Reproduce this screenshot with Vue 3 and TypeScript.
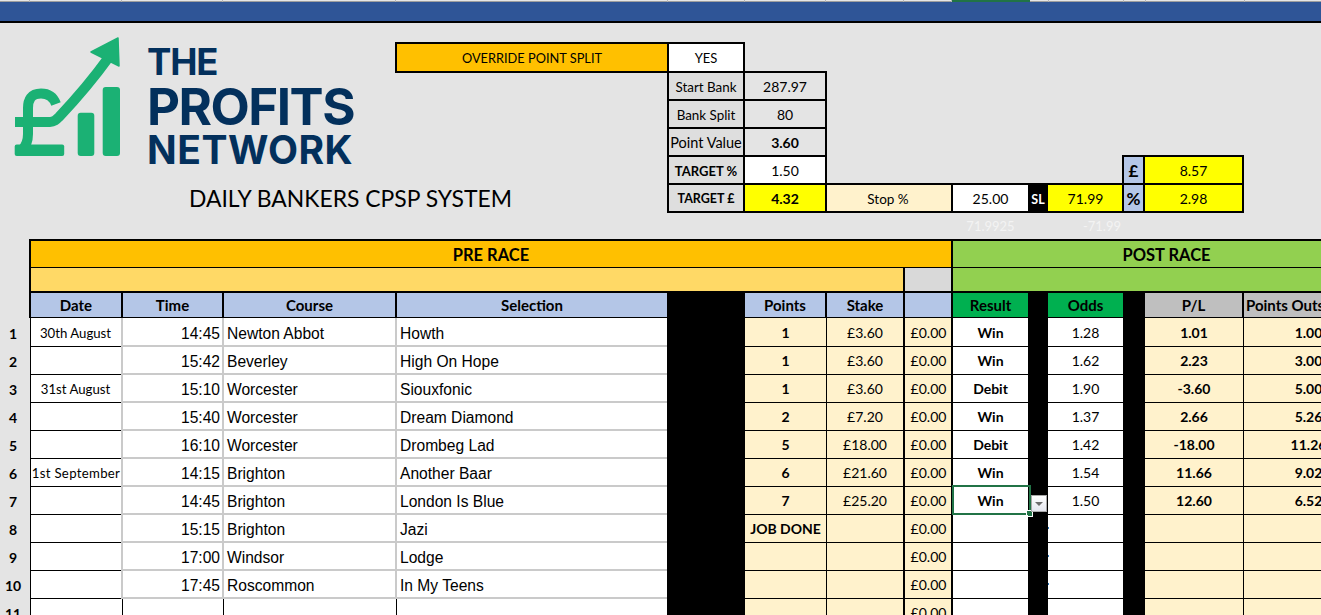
<script setup lang="ts">
interface Row {
  n: number
  date: string
  time: string
  course: string
  sel: string
  pts: string
  stake: string
  res: string
  odds: string
  pl: string
  outs: string
}

const rows: Row[] = [
  { n: 1, date: '30th August', time: '14:45', course: 'Newton Abbot', sel: 'Howth', pts: '1', stake: '£3.60', res: 'Win', odds: '1.28', pl: '1.01', outs: '1.00' },
  { n: 2, date: '', time: '15:42', course: 'Beverley', sel: 'High On Hope', pts: '1', stake: '£3.60', res: 'Win', odds: '1.62', pl: '2.23', outs: '3.00' },
  { n: 3, date: '31st August', time: '15:10', course: 'Worcester', sel: 'Siouxfonic', pts: '1', stake: '£3.60', res: 'Debit', odds: '1.90', pl: '-3.60', outs: '5.00' },
  { n: 4, date: '', time: '15:40', course: 'Worcester', sel: 'Dream Diamond', pts: '2', stake: '£7.20', res: 'Win', odds: '1.37', pl: '2.66', outs: '5.26' },
  { n: 5, date: '', time: '16:10', course: 'Worcester', sel: 'Drombeg Lad', pts: '5', stake: '£18.00', res: 'Debit', odds: '1.42', pl: '-18.00', outs: '11.26' },
  { n: 6, date: '1st September', time: '14:15', course: 'Brighton', sel: 'Another Baar', pts: '6', stake: '£21.60', res: 'Win', odds: '1.54', pl: '11.66', outs: '9.02' },
  { n: 7, date: '', time: '14:45', course: 'Brighton', sel: 'London Is Blue', pts: '7', stake: '£25.20', res: 'Win', odds: '1.50', pl: '12.60', outs: '6.52' },
  { n: 8, date: '', time: '15:15', course: 'Brighton', sel: 'Jazi', pts: 'JOB DONE', stake: '', res: '', odds: '', pl: '', outs: '' },
  { n: 9, date: '', time: '17:00', course: 'Windsor', sel: 'Lodge', pts: '', stake: '', res: '', odds: '', pl: '', outs: '' },
  { n: 10, date: '', time: '17:45', course: 'Roscommon', sel: 'In My Teens', pts: '', stake: '', res: '', odds: '', pl: '', outs: '' },
  { n: 11, date: '', time: '', course: '', sel: '', pts: '', stake: '', res: '', odds: '', pl: '', outs: '' }
]

const ruler: number[] = [30, 92, 101, 173, 272, 77, 81, 78, 48, 78, 19, 75, 22, 99, 77]
const selectedRow = 7
</script>

<template>
  <div class="page">
    <div class="ruler">
      <i v-for="(w, i) in ruler" :key="i" :class="{ on: i === 9 }" :style="{ width: w + 'px' }"></i>
    </div>
    <div class="band"></div>

    <div class="sheet">
      <div class="brand">
        <div class="logo">
          <svg class="mark" viewBox="14 37 107 120" width="107" height="120" aria-hidden="true">
            <g fill="none" stroke="#1bb174" stroke-width="10">
              <path d="M56 104C53 96 47 93.500 41 93.500C31 93.500 28 100 28 108V134C28 142 26 146 22 150" />
              <path d="M15 122H50C54 122 56 120 59 117C76 99 96 75 109 57" />
            </g>
            <rect x="14.700" y="144.500" width="49.500" height="11.500" rx="2" fill="#1bb174" />
            <path d="M118 38L91 52L119 66Z" fill="#1bb174" stroke="#1bb174" stroke-width="1.500" stroke-linejoin="round" />
            <rect x="77.700" y="112.700" width="16.600" height="43.300" rx="3" fill="#1bb174" />
            <rect x="102.700" y="87" width="17.300" height="69" rx="3" fill="#1bb174" />
          </svg>
          <div class="words">
            <div class="w1">THE</div>
            <div class="w2">PROFITS</div>
            <div class="w3">NETWORK</div>
          </div>
        </div>
        <div class="title">DAILY BANKERS CPSP SYSTEM</div>
      </div>

      <div class="cell override">OVERRIDE POINT SPLIT</div>
      <div class="cell yes">YES</div>
      <div class="cap r2-top"></div>

      <div class="cell lab r3">Start Bank</div>
      <div class="cell val r3">287.97</div>
      <div class="cell lab r4">Bank Split</div>
      <div class="cell val r4">80</div>
      <div class="cell lab r5 tight">Point Value</div>
      <div class="cell val r5 b">3.60</div>
      <div class="cell lab r6 b">TARGET %</div>
      <div class="cell val r6 white">1.50</div>
      <div class="cap r6-cap"></div>
      <div class="cap r5-cap"></div>
      <div class="cell sym r6 big">£</div>
      <div class="cell money r6">8.57</div>
      <div class="cell lab r7 b small">TARGET £</div>
      <div class="cell val r7 yellow b">4.32</div>
      <div class="cell stop r7">Stop %</div>
      <div class="cell stopv r7">25.00</div>
      <div class="cell sl r7">SL</div>
      <div class="cell slv r7">71.99</div>
      <div class="cell sym r7 big">%</div>
      <div class="cell money r7">2.98</div>

      <div class="ghost g1">71.9925</div>
      <div class="ghost g2">-71.99</div>

      <!-- section bands -->
      <div class="rh"></div>
      <div class="cell pre">PRE RACE</div>
      <div class="cell post">POST RACE</div>
      <div class="rh"></div>
      <div class="sub-pre"></div>
      <div class="sub-grey"></div>
      <div class="sub-post"></div>

      <!-- column titles -->
      <div class="rh"></div>
      <div class="cell th lead">Date</div>
      <div class="cell th">Time</div>
      <div class="cell th">Course</div>
      <div class="cell th no-r">Selection</div>
      <div class="blk"></div>
      <div class="cell th">Points</div>
      <div class="cell th">Stake</div>
      <div class="cell th"></div>
      <div class="cell th grn no-r">Result</div>
      <div class="blk"></div>
      <div class="cell th grn no-r">Odds</div>
      <div class="blk"></div>
      <div class="cell th gry">P/L</div>
      <div class="cell th gry outs-h">Points Outstanding</div>

      <!-- data rows -->
      <template v-for="r in rows" :key="r.n">
        <div class="cell rh num" :class="{ first: r.n === 1 }">{{ r.n }}</div>
        <div class="cell d-date" :class="{ tail: r.n === 11, wide: r.date.length > 11, first: r.n === 1 }">{{ r.date }}</div>
        <div class="cell d-time" :class="{ tail: r.n === 11 }">{{ r.time }}</div>
        <div class="cell d-text d-course" :class="{ tail: r.n === 11 }">{{ r.course }}</div>
        <div class="cell d-text d-sel" :class="{ tail: r.n === 11 }">{{ r.sel }}</div>
        <div class="blk"></div>
        <div class="cell d-cream d-thin b" :class="{ first: r.n === 1 }">{{ r.pts }}</div>
        <div class="cell d-cream d-thick" :class="{ first: r.n === 1 }">{{ r.stake }}</div>
        <div class="cell d-cream d-thick d-zero" :class="{ first: r.n === 1 }">£0.00</div>
        <div class="cell d-res b" :class="{ first: r.n === 1 }">
          {{ r.res }}
          <template v-if="r.n === selectedRow">
            <span class="picked"></span>
            <span class="handle"></span>
            <span class="drop"></span>
          </template>
        </div>
        <div class="blk"></div>
        <div class="cell d-odds" :class="{ dotted: r.n > 7 && r.n < 11, first: r.n === 1 }">{{ r.odds }}</div>
        <div class="blk"></div>
        <div class="cell d-cream d-thin b" :class="{ first: r.n === 1 }">{{ r.pl }}</div>
        <div class="cell d-cream d-outs b" :class="{ first: r.n === 1 }">{{ r.outs }}</div>
      </template>
    </div>
  </div>
</template>

<style scoped>
.page {
  width: 1321px;
  height: 615px;
  overflow: hidden;
  background: #e4e4e4;
  font-family: Lato, "Open Sans", sans-serif;
  font-size: 14px;
  color: #000;
}
.ruler {
  display: flex;
  height: 2px;
  background: #e6e6e6;
  box-sizing: border-box;
  border-bottom: 1px solid #9f9f9f;
}
.ruler i {
  display: block;
  box-sizing: border-box;
  height: 2px;
  flex: none;
  border-right: 1px solid #b5b5b5;
}
.ruler i.on {
  background: #217346;
  border-right: 0;
}
.band {
  height: 19px;
  background: #2f5597;
  border-bottom: 2px solid #000;
}
.sheet {
  display: grid;
  width: 1340px;
  grid-template-columns:
    [head] 30px [date] 93px [time] 101px [course] 173px [sel] 270px [gap1] 78px
    [pts] 82px [stake] 78px [blank] 48px [res] 75px [gap2] 20px [odds] 75px
    [gap3] 22px [pl] 99px [outs] 96px [end];
  grid-template-rows: 19px 31px 28px 28px 28px 28px 28px 26px 29px 25px 25px 29px;
  grid-auto-rows: 28px;
}
.cell {
  box-sizing: border-box;
  display: flex;
  align-items: center;
  justify-content: center;
  white-space: nowrap;
  overflow: visible;
  min-width: 0;
}
.b {
  font-weight: 700;
}
.first {
  padding-top: 1px;
}

/* brand */
.brand {
  grid-column: head / gap1;
  grid-row: 1 / 9;
  padding: 14px 0 0 14px;
  min-width: 0;
}
.logo {
  display: flex;
  align-items: flex-start;
}
.mark {
  display: block;
  flex: none;
}
.words {
  margin-left: 26px;
  margin-top: 5px;
  font-family: Inter, sans-serif;
  font-weight: 700;
  color: #03305c;
}
.w1 {
  font-size: 36.500px;
  line-height: 40px;
  letter-spacing: -1.200px;
}
.w2 {
  font-size: 51px;
  line-height: 49px;
  letter-spacing: -1.500px;
}
.w3 {
  font-size: 39px;
  line-height: 38px;
  letter-spacing: 0.500px;
}
.title {
  margin: 15px 0 0 175px;
  font-size: 22.900px;
  line-height: 28px;
  white-space: nowrap;
}

/* control panel */
.override {
  grid-column: sel / gap1;
  grid-row: 2;
  margin-left: -2px;
  background: #ffc000;
  border: 2px solid #000;
  border-right: 0;
  font-size: 12.800px;
}
.yes {
  grid-column: gap1 / pts;
  grid-row: 2;
  background: #fff;
  border: 2px solid #000;
  font-size: 13px;
}
.cap {
  box-sizing: border-box;
  border-bottom: 2px solid #000;
}
.r2-top {
  grid-column: pts / stake;
  grid-row: 2;
}
.r3 { grid-row: 3; }
.r4 { grid-row: 4; }
.r5 { grid-row: 5; }
.r6 { grid-row: 6; }
.r7 { grid-row: 7; }
.lab {
  grid-column: gap1 / pts;
  padding-top: 1px;
  background: #dedede;
  border: solid #000;
  border-width: 0 2px 2px;
  font-size: 13.400px;
}
.lab.b {
  font-size: 13px;
}
.lab.small {
  font-size: 12.500px;
}
.tight {
  font-size: 14.500px;
}
.val {
  grid-column: pts / stake;
  padding-top: 1px;
  border: solid #000;
  border-width: 0 2px 2px 0;
}
.white {
  background: #fff;
}
.yellow {
  background: #ff0;
}
.r6-cap {
  grid-column: stake / gap3;
  grid-row: 6;
}
.r5-cap {
  grid-column: gap3 / outs;
  grid-row: 5;
  margin-left: -1px;
}
.sym {
  grid-column: gap3 / pl;
  margin-left: -1px;
  background: #b4c6e7;
  border: solid #000;
  border-width: 0 2px 2px;
}
.big {
  font-size: 17px;
  font-weight: 700;
}
.money {
  grid-column: pl / outs;
  padding-top: 1px;
  background: #ff0;
  border: solid #000;
  border-width: 0 2px 2px 0;
}
.stop {
  grid-column: stake / res;
  padding: 1px 2px 0 0;
  background: #fff2cc;
  border: solid #000;
  border-width: 0 2px 2px 0;
  font-size: 13.500px;
}
.stopv {
  grid-column: res / gap2;
  padding-top: 1px;
  background: #fff;
  border-bottom: 2px solid #000;
}
.sl {
  grid-column: gap2 / odds;
  background: #000;
  color: #fff;
  font-weight: 700;
  font-size: 12.500px;
}
.slv {
  grid-column: odds / gap3;
  padding-top: 1px;
  background: #ff0;
  border-bottom: 2px solid #000;
}
.ghost {
  grid-row: 8;
  color: #f3f3f3;
  font-size: 13px;
  align-self: center;
  white-space: nowrap;
}
.g1 {
  grid-column: res / gap2;
  text-align: center;
}
.g2 {
  grid-column: odds / gap3;
  text-align: right;
  padding-right: 2px;
}

/* bands */
.rh {
  grid-column: head / date;
  background: #e4e4e4;
}
.pre {
  grid-column: date / res;
  padding-top: 1px;
  background: #ffc000;
  border: solid #000;
  border-width: 2px 2px 1px 1px;
  box-shadow: -1px 0 0 #000;
  font-size: 16.500px;
  font-weight: 700;
}
.post {
  grid-column: res / end;
  padding: 1px 0 0 40px;
  background: #92d050;
  border: solid #000;
  border-width: 2px 0 1px;
  font-size: 16.500px;
  font-weight: 700;
}
.sub-pre {
  grid-column: date / blank;
  box-sizing: border-box;
  background: #ffd966;
  border: solid #000;
  border-width: 0 2px 2px 1px;
  box-shadow: -1px 0 0 #000;
}
.sub-grey {
  grid-column: blank / res;
  box-sizing: border-box;
  background: #d9d9d9;
  border: solid #000;
  border-width: 0 2px 2px 0;
}
.sub-post {
  grid-column: res / end;
  box-sizing: border-box;
  background: #92d050;
  border-bottom: 2px solid #000;
}

/* column titles */
.th {
  background: #b4c6e7;
  border: solid #000;
  border-width: 0 2px 1px 0;
  font-size: 15px;
  font-weight: 700;
}
.lead {
  border-left-width: 1px;
  box-shadow: -1px 0 0 #000;
}
.no-r {
  border-right: 0;
}
.grn {
  background: #00b050;
}
.gry {
  background: #bfbfbf;
}
.outs-h {
  justify-content: flex-start;
  padding-left: 2px;
  overflow: hidden;
  border-right: 0;
}
.blk {
  background: #000;
}

/* data */
.num {
  font-size: 14px;
  font-weight: 700;
  padding-right: 4px;
}
.d-date {
  background: #fff;
  font-size: 13.200px;
  padding-right: 1px;
  border-left: 1px solid #000;
  border-right: 2px solid #cacaca;
  box-shadow: inset 0 -1px 0 #000;
}
.d-date.wide {
  letter-spacing: 0.300px;
  padding-left: 1px;
}
.d-time,
.d-text {
  padding-top: 4px;
  background: #fff;
  font-family: "Liberation Sans", Arial, sans-serif;
  font-size: 15.600px;
  border-bottom: 2px solid #cacaca;
  border-right: 2px solid #cacaca;
}
.d-time {
  justify-content: flex-end;
  padding-right: 2px;
}
.d-text {
  justify-content: flex-start;
  padding-left: 3px;
}
.d-sel {
  border-right: 0;
}
.d-date.tail,
.d-time.tail,
.d-text.tail {
  border-bottom: 0;
  box-shadow: none;
  border-right: 1px solid #000;
}
.d-sel.tail {
  border-right: 0;
}
.d-cream {
  background: #fff2cc;
  border-bottom: 1px solid #000;
}
.d-thin {
  border-right: 1px solid #000;
}
.d-thick {
  border-right: 2px solid #000;
}
.d-zero {
  padding-left: 1px;
}
.d-outs {
  padding-left: 33px;
}
.d-res,
.d-odds {
  background: #fff;
  border-bottom: 1px solid #000;
  position: relative;
}
.dotted::before {
  content: "";
  position: absolute;
  left: 0;
  top: 12px;
  width: 1px;
  height: 2px;
  background: #2e75b6;
}
.picked {
  position: absolute;
  left: -1px;
  top: -2px;
  width: 79px;
  height: 30px;
  box-sizing: border-box;
  border: 2px solid #217346;
}
.handle {
  position: absolute;
  left: 74px;
  top: 24px;
  width: 5px;
  height: 5px;
  background: #217346;
  box-shadow: 0 0 0 1px #fff;
}
.drop {
  position: absolute;
  left: 78px;
  top: 8px;
  width: 16px;
  height: 17px;
  box-sizing: border-box;
  background: linear-gradient(#fff, #e4e6ef);
  border: 1px solid #a9a9a9;
}
.drop::after {
  content: "";
  position: absolute;
  left: 3px;
  top: 6px;
  border: solid transparent;
  border-width: 4px 4px 0;
  border-top-color: #6d6d6d;
}
</style>
